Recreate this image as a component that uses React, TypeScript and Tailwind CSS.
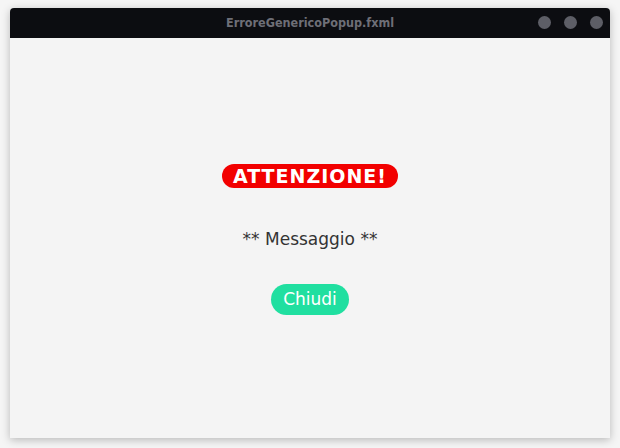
import React from 'react';

export default function App() {
  return (
    <div className="w-[620px] h-[448px] bg-[#f5f5f5] pt-[8px] px-[10px]">
      <div className="w-[600px] h-[430px] flex flex-col rounded-t-[4px] overflow-hidden bg-[#f4f4f4] shadow-[0_2px_8px_rgba(0,0,0,0.25)]">
        {/* title bar */}
        <div className="relative h-[30px] bg-[#0c0d11] flex items-center justify-center">
          <span
            className="text-[12.5px] text-[#6e6f77] font-bold"
            style={{ fontFamily: '"DejaVu Sans Condensed", "DejaVu Sans", sans-serif', fontStretch: 'condensed' }}
          >
            ErroreGenericoPopup.fxml
          </span>
          <div className="absolute right-[7px] top-[8px] flex gap-[13px]">
            <div className="w-[13px] h-[13px] rounded-full bg-[#5d5e66]" />
            <div className="w-[13px] h-[13px] rounded-full bg-[#5d5e66]" />
            <div className="w-[13px] h-[13px] rounded-full bg-[#5d5e66]" />
          </div>
        </div>

        {/* body */}
        <div
          className="flex-1 flex flex-col items-center pt-[126px]"
          style={{ fontFamily: '"DejaVu Sans", sans-serif' }}
        >
          <div className="h-[24px] px-[11px] rounded-full bg-[#f20000] flex items-center">
            <span className="text-white font-bold text-[19px] tracking-[1px] leading-none">ATTENZIONE!</span>
          </div>
          <div className="mt-[43px] text-[17px] text-[#333333] leading-none">** Messaggio **</div>
          <button className="mt-[36px] h-[31px] px-[12px] rounded-full bg-[#20dfa0] text-white text-[17px] leading-none">
            Chiudi
          </button>
        </div>
      </div>
    </div>
  );
}
